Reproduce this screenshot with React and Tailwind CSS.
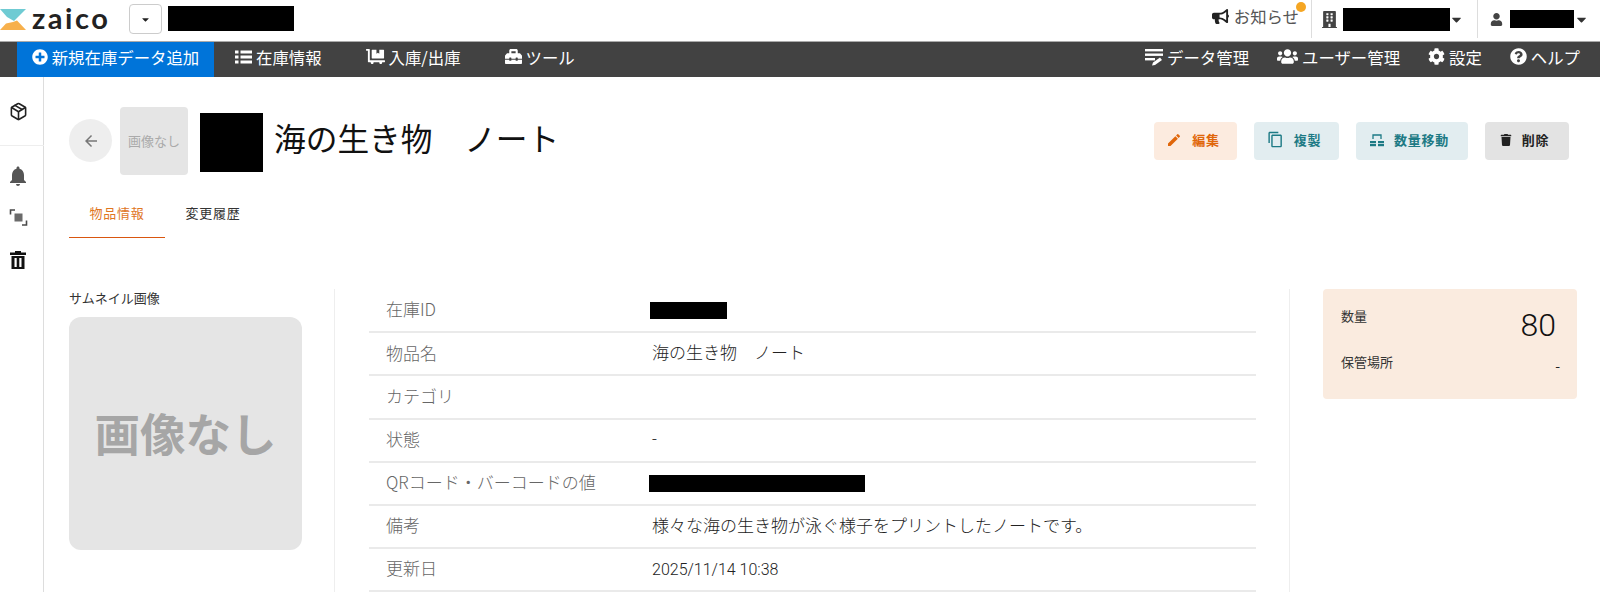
import React from "react";
import { FaBullhorn, FaBuilding, FaUser, FaCaretDown, FaPlusCircle, FaDollyFlatbed, FaToolbox, FaUsers, FaCog, FaQuestionCircle, FaTrash } from "react-icons/fa";
import { MdArrowBack, MdEdit, MdContentCopy, MdNotifications } from "react-icons/md";
import { LuPackage } from "react-icons/lu";

const font = { fontFamily: '"Noto Sans CJK JP", sans-serif' };

function ListIcon() {
  return (
    <svg width="17" height="14" viewBox="0 0 17 14" fill="currentColor">
      <rect x="0" y="0.5" width="3.5" height="3" /><rect x="5.5" y="0.5" width="11.5" height="3" />
      <rect x="0" y="5.5" width="3.5" height="3" /><rect x="5.5" y="5.5" width="11.5" height="3" />
      <rect x="0" y="10.5" width="3.5" height="3" /><rect x="5.5" y="10.5" width="11.5" height="3" />
    </svg>
  );
}
function DataIcon() {
  return (
    <svg width="18" height="18" viewBox="0 0 18 18" fill="currentColor">
      <rect x="0" y="1" width="18" height="2.4" /><rect x="0" y="5.5" width="18" height="2.4" /><rect x="0" y="10" width="10" height="2.4" />
      <path d="M7 17.5l1-3 7-5 2 2.6-7 5z" />
    </svg>
  );
}
function TransferIcon() {
  return (
    <svg width="19" height="19" viewBox="0 0 19 19" fill="none" stroke="#4a4a4a" strokeWidth="1.6">
      <path d="M6 2H1.5v4.5M13 17h4.5v-4.5" />
      <rect x="5.5" y="5.5" width="8" height="8" fill="#6b6b6b" stroke="none" />
    </svg>
  );
}
function TrashIcon() {
  return (
    <svg width="16" height="18" viewBox="0 0 16 18" fill="#111">
      <path d="M5 0h6v1.5h5V4H0V1.5h5z" />
      <path fillRule="evenodd" d="M1.5 5h13v13h-13zM4.5 7v9h2.2V7zM9.3 7v9h2.2V7z" />
    </svg>
  );
}
function MoveIcon() {
  return (
    <svg width="14" height="14" viewBox="0 0 14 14" fill="currentColor">
      <rect x="0" y="8" width="6" height="2.2" /><rect x="8" y="8" width="6" height="2.2" />
      <rect x="0" y="11" width="6" height="2.2" /><rect x="8" y="11" width="6" height="2.2" />
      <path d="M3 6V2h8v4" fill="none" stroke="currentColor" strokeWidth="1.3" />
    </svg>
  );
}
function Logo() {
  return (
    <svg width="26" height="21" viewBox="0 0 26 21" className="shrink-0 -mt-[3px]">
      <path d="M0 0H26L14 12 7 8z" fill="#6fcbd3" />
      <path d="M0 21H26L17 11.5 13 13 6 14.5z" fill="#f7b04c" />
    </svg>
  );
}

function TopNavItem({ icon, label, className }) {
  return (
    <div className={"flex items-center gap-1 pb-[5px] text-white text-[16.4px] " + (className || "")}>
      {icon}
      <span>{label}</span>
    </div>
  );
}
function ActionButton({ icon, label, className }) {
  return (
    <div className={"flex items-center justify-center gap-[10px] h-[38px] pb-[3px] pr-[5px] rounded text-[13px] font-semibold tracking-[0.75px] " + className}>
      {icon}
      <span>{label}</span>
    </div>
  );
}

const rows = [
  ["在庫ID", <div key="a" className="w-[77px] h-[17px] bg-black -ml-[2px]" />],
  ["物品名", "海の生き物　ノート"],
  ["カテゴリ", ""],
  ["状態", "-"],
  ["QRコード・バーコードの値", <div key="b" className="w-[216px] h-[17px] bg-black -ml-[3px]" />],
  ["備考", "様々な海の生き物が泳ぐ様子をプリントしたノートです。"],
  ["更新日", <span key="c" className="text-[16px]">2025/11/14 10:38</span>],
];

export default function App() {
  return (
    <div className="w-[1600px] h-[592px] overflow-hidden bg-white text-[#222]" style={font}>
      <header className="flex items-center h-[41px] bg-white">
        <Logo />
        <span className="ml-[6px] text-[29px] leading-[34px] font-bold tracking-[2.5px] text-[#222] -mt-[6px]" style={{ fontFamily: "Lato, sans-serif" }}>zaico</span>
        <button className="ml-[19px] w-[33px] h-[30px] -mt-[3px] flex items-center justify-center border border-[#ccc] rounded bg-white">
          <FaCaretDown className="text-[11px] text-[#222]" />
        </button>
        <div className="ml-[6px] w-[126px] h-[25px] -mt-[4px] bg-black" />
        <div className="ml-auto flex items-center h-[38px] self-start">
          <div className="relative flex items-center gap-[5px] pr-[12px] -mt-[5px] text-[16.4px] text-[#555]">
            <FaBullhorn className="text-[17px] text-[#222]" />
            <span>お知らせ</span>
            <span className="absolute right-[5px] -top-[2px] w-[10px] h-[10px] rounded-full bg-[#f5a623]" />
          </div>
          <div className="flex items-center h-[38px] border-l border-[#ddd] pl-[9px] pr-[13px]">
            <FaBuilding className="text-[#444] text-[17px]" />
            <div className="ml-[5px] w-[107px] h-[23px] bg-black" />
            <FaCaretDown className="-ml-[1px] text-[15px] text-[#333]" />
          </div>
          <div className="flex items-center h-[38px] border-l border-[#ddd] pl-[12px] pr-[11px]">
            <FaUser className="text-[#444] text-[13px]" />
            <div className="ml-[7px] w-[64px] h-[18px] bg-black" />
            <FaCaretDown className="text-[15px] text-[#333]" />
          </div>
        </div>
      </header>
      <nav className="flex items-center h-[36px] bg-[#424242] border-t border-[#aaa] pl-[17px] pr-[20px]">
        <TopNavItem className="w-[197px] h-full justify-center bg-[#0074d9] pb-[5px]" icon={<FaPlusCircle className="text-[16px]" />} label="新規在庫データ追加" />
        <TopNavItem className="ml-[21px]" icon={<ListIcon />} label="在庫情報" />
        <TopNavItem className="ml-[44px]" icon={<FaDollyFlatbed className="text-[19px]" />} label="入庫/出庫" />
        <TopNavItem className="ml-[44px]" icon={<FaToolbox className="text-[17px]" />} label="ツール" />
        <div className="ml-auto flex items-center gap-[28px]">
          <TopNavItem icon={<DataIcon />} label="データ管理" />
          <TopNavItem icon={<FaUsers className="text-[21px]" />} label="ユーザー管理" />
          <TopNavItem icon={<FaCog className="text-[17px]" />} label="設定" />
          <TopNavItem icon={<FaQuestionCircle className="text-[17px]" />} label="ヘルプ" />
        </div>
      </nav>
      <div className="flex h-[515px]">
        <aside className="w-[44px] shrink-0 border-r border-[#ddd] flex flex-col items-center pr-[7px]">
          <div className="w-full h-[68px] flex items-center justify-center">
            <LuPackage className="text-[19px] text-[#222]" />
          </div>
          <div className="w-[44px] -mr-[7px] h-[1px] bg-[#eee] shrink-0" />
          <MdNotifications className="mt-[18px] text-[24px] text-[#555]" />
          <div className="mt-[20px]"><TransferIcon /></div>
          <div className="mt-[24px]"><TrashIcon /></div>
        </aside>
        <main className="flex-1 min-w-0">
          <div className="flex items-start pl-[25px] pr-[31px] pt-[30px]">
            <div className="mt-[12px] w-[43px] h-[43px] rounded-full bg-[#eee] flex items-center justify-center">
              <MdArrowBack className="text-[18px] text-[#777]" />
            </div>
            <div className="ml-[8px] w-[68px] h-[68px] rounded bg-[#e5e5e5] flex items-center justify-center text-[13px] text-[#aaa]">画像なし</div>
            <div className="ml-[12px] mt-[6px] w-[63px] h-[59px] bg-black" />
            <h1 className="ml-[11px] mt-[6px] text-[31.7px] leading-[48px] text-[#111]">海の生き物　ノート</h1>
            <div className="ml-auto mt-[15px] flex gap-[17px]">
              <ActionButton className="w-[83px] bg-[#fcebdf] text-[#e0660a]" icon={<MdEdit className="text-[16px]" />} label="編集" />
              <ActionButton className="w-[85px] bg-[#e2edf0] text-[#1d7a85]" icon={<MdContentCopy className="text-[17px]" />} label="複製" />
              <ActionButton className="w-[112px] bg-[#e2edf0] text-[#1d7a85]" icon={<MoveIcon />} label="数量移動" />
              <ActionButton className="w-[84px] bg-[#e3e3e3] text-[#222]" icon={<FaTrash className="text-[12px]" />} label="削除" />
            </div>
          </div>
          <div className="flex ml-[25px] mt-[21px] h-[42px] text-[13px] tracking-[0.7px]">
            <div className="w-[96px] flex items-start justify-center pt-[7px] border-b border-[#d9560f] text-[#e0761f]">物品情報</div>
            <div className="w-[96px] flex items-start justify-center pt-[7px] text-[#333]">変更履歴</div>
          </div>
          <div className="flex mt-[51px] ml-[25px]">
            <section className="w-[266px] shrink-0 h-[303px] border-r border-[#eee]">
              <div className="text-[13px] leading-[18px] text-[#333]">サムネイル画像</div>
              <div className="mt-[10px] w-[233px] h-[233px] pb-[3px] rounded-[12px] bg-[#e5e5e5] flex items-center justify-center text-[45.5px] font-semibold text-[#a6a6a6]">画像なし</div>
            </section>
            <section className="ml-[34px] w-[887px] shrink-0 pt-[1px]">
              {rows.map(([k, v]) => (
                <div key={k} className="flex items-center h-[43.2px] border-b-2 border-[#eaeaea] pl-[17px] text-[17px]">
                  <div className="w-[266px] shrink-0 pb-[3px] font-light text-[#666]">{k}</div>
                  <div className="text-[#222] font-light" style={{ fontFamily: 'Roboto, "Noto Sans CJK JP", sans-serif' }}>{v}</div>
                </div>
              ))}
            </section>
            <div className="ml-[33px] w-[1px] h-[303px] bg-[#eee]" />
            <aside className="ml-[33px] w-[254px] h-[110px] rounded bg-[#faebdf] pl-[18px] pr-[21px] pt-[16px]">
              <div className="flex justify-between items-start">
                <span className="text-[13px] leading-[18px] mt-[2px] text-[#333]">数量</span>
                <span className="text-[32px] leading-[38px] mt-[1px] font-light text-[#111]" style={{ fontFamily: "Roboto, sans-serif" }}>80</span>
              </div>
              <div className="flex justify-between items-center mt-[3px] -mr-[4px]">
                <span className="text-[13px] leading-[18px] text-[#333]">保管場所</span>
                <span className="text-[14px] mt-[8px] text-[#222]">-</span>
              </div>
            </aside>
          </div>
        </main>
      </div>
    </div>
  );
}
